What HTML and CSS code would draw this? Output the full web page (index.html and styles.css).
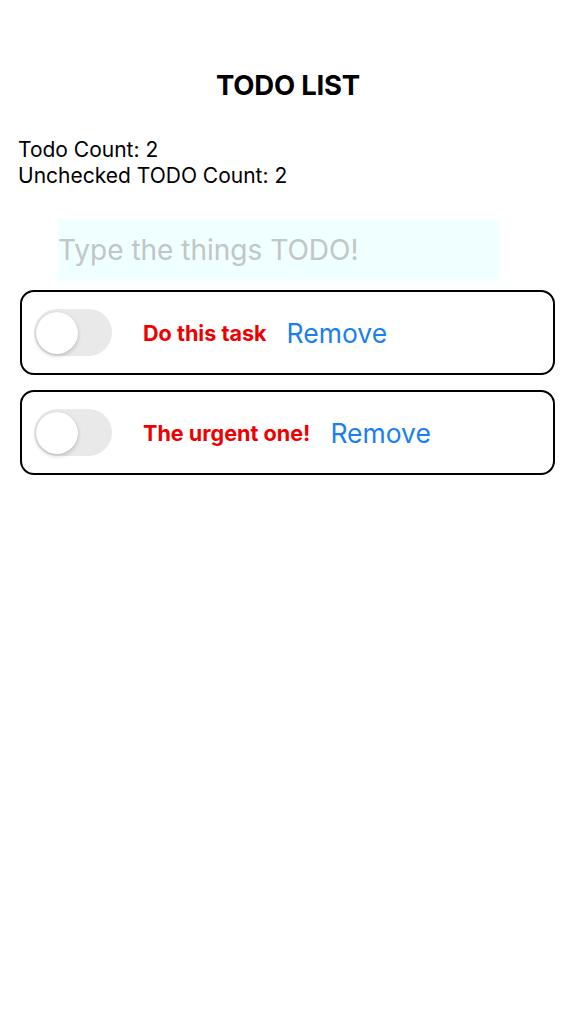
FILE: index.html
```html
<!DOCTYPE html>
<html>
<head>
<meta charset="utf-8">
<link rel="stylesheet" href="styles.css">
</head>
<body>
<div class="app">
  <h1 class="title">TODO LIST</h1>
  <div class="counts">
    <div>Todo Count: 2</div>
    <div>Unchecked TODO Count: 2</div>
  </div>
  <div class="input-wrap">
    <input class="todo-input" type="text" placeholder="Type the things TODO!">
  </div>
  <div class="list">
    <div class="card">
      <div class="switch"><div class="knob"></div></div>
      <span class="task">Do this task</span>
      <span class="remove">Remove</span>
    </div>
    <div class="card">
      <div class="switch"><div class="knob"></div></div>
      <span class="task">The urgent one!</span>
      <span class="remove">Remove</span>
    </div>
  </div>
</div>
</body>
</html>
```

FILE: styles.css
```css
html, body {
  margin: 0;
  padding: 0;
  background: #ffffff;
}
body {
  font-family: Inter, Roboto, "Liberation Sans", sans-serif;
  color: #000;
}
.app {
  display: flex;
  flex-direction: column;
  padding-top: 68px;
}
.title {
  margin: 0;
  text-align: center;
  font-size: 27.5px;
  line-height: 34px;
  font-weight: 700;
  letter-spacing: -0.2px;
}
.counts {
  margin-top: 35px;
  padding-left: 18px;
  font-size: 21px;
  line-height: 26px;
}
.input-wrap {
  margin-top: 30px;
  padding-left: 58px;
}
.todo-input {
  display: block;
  box-sizing: border-box;
  width: 441px;
  height: 62px;
  border: none;
  outline: none;
  background: #f0ffff;
  padding: 0;
  font-family: inherit;
  font-size: 28px;
  color: #000;
}
.todo-input::placeholder {
  color: #c1c6c7;
}
.list {
  margin-top: 9px;
  display: flex;
  flex-direction: column;
  gap: 15px;
  padding: 0 21px 0 20px;
}
.card {
  box-sizing: border-box;
  height: 85px;
  border: 2px solid #000;
  border-radius: 14px;
  display: flex;
  align-items: center;
  padding-left: 12px;
}
.switch {
  width: 78px;
  height: 47px;
  border-radius: 24px;
  background: #e9e9ea;
  display: flex;
  align-items: center;
  padding-left: 2px;
  box-sizing: border-box;
  flex: none;
}
.knob {
  width: 42px;
  height: 42px;
  border-radius: 50%;
  background: #fff;
  box-shadow: 0 2px 4px rgba(0,0,0,0.18), 0 0 1px rgba(0,0,0,0.15);
}
.task {
  margin-left: 31px;
  color: #ee0000;
  font-weight: 700;
  font-size: 21.6px;
}
.remove {
  margin-left: 20px;
  color: #1a7ff0;
  font-size: 26.5px;
}
```
